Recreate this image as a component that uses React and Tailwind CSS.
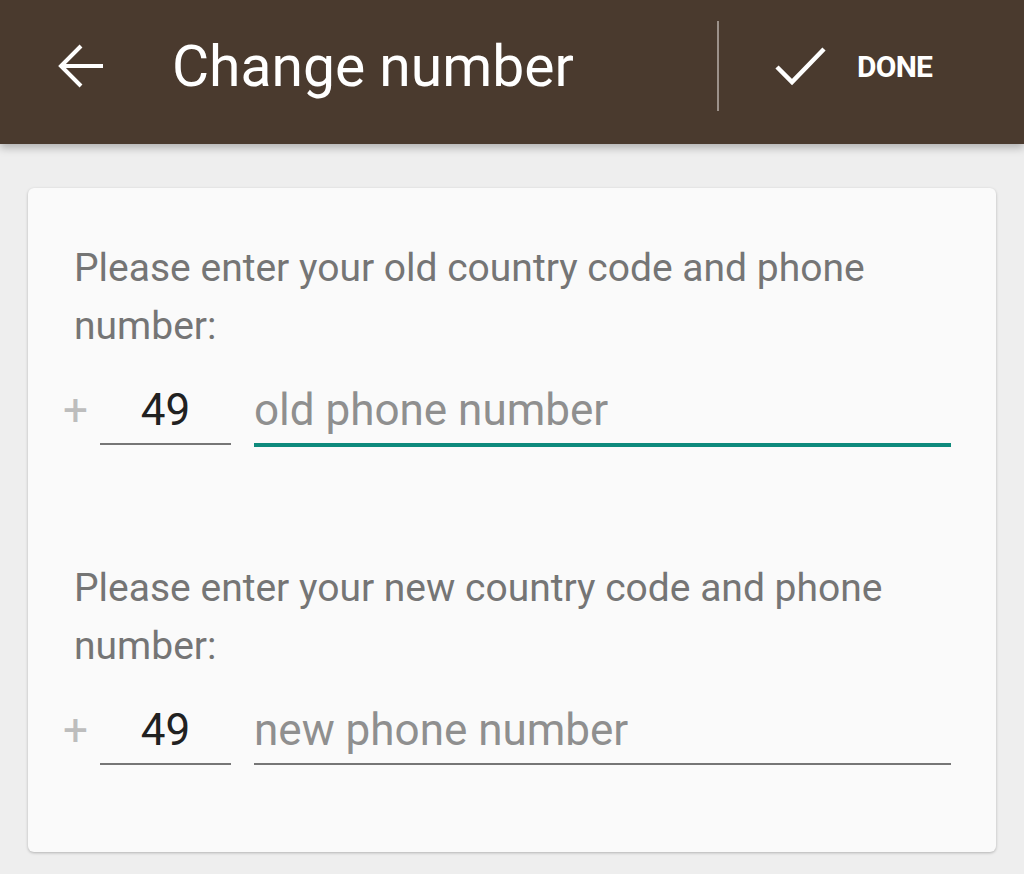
const font = { fontFamily: 'Roboto, "Liberation Sans", sans-serif' };

function PhoneRow({ placeholder, active }) {
  return (
    <div className="flex items-start pl-[35px] pr-[45px]">
      <span className="w-[37px] pt-[2px] text-[44px] leading-[50px] text-[#bdbdbd]">+</span>
      <div className="w-[131px] pt-[2px] pb-[8px] border-b-2 border-[#767676] text-center text-[44px] leading-[50px] text-[#212121]">
        49
      </div>
      <div
        className={`flex-1 ml-[23px] pt-[2px] pb-[8px] text-[44px] leading-[50px] text-[#8f8f8f] ${
          active ? 'border-b-4 border-[#0e8a7c]' : 'border-b-2 border-[#767676]'
        }`}
      >
        {placeholder}
      </div>
    </div>
  );
}

export default function App() {
  return (
    <div className="w-[1024px] h-[874px] bg-[#eeeeee] overflow-hidden" style={font}>
      <header className="relative z-10 h-[144px] bg-[#4a3a2e] shadow-[0_4px_8px_rgba(0,0,0,0.25)]">
        <div className="flex items-center h-[132px]">
          <svg className="ml-[57px] w-[46px] h-[44px]" viewBox="0 0 46 44" fill="none">
            <path d="M46 22H5M24 2L4 22l20 20" stroke="#fff" strokeWidth="4" />
          </svg>
          <h1 className="ml-[69px] text-[57px] text-white leading-none">Change number</h1>
          <div className="ml-auto w-[2px] h-[90px] bg-[#9c918a]" />
          <div className="flex items-center w-[305px]">
            <svg className="ml-[55px] w-[52px] h-[40px]" viewBox="0 0 52 40" fill="none">
              <path d="M3 21l15 15L50 3" stroke="#fff" strokeWidth="4.5" />
            </svg>
            <span className="ml-[31px] text-[30px] font-bold text-white tracking-tight">DONE</span>
          </div>
        </div>
      </header>
      <main className="mx-[28px] mt-[44px] h-[664px] bg-[#fafafa] rounded-[6px] shadow-[0_1px_3px_rgba(0,0,0,0.25)] pt-[51px]">
        <p className="pl-[46px] pr-[40px] text-[39px] leading-[58px] text-[#757575]">
          Please enter your old country code and phone number:
        </p>
        <div className="mt-[28px]">
          <PhoneRow placeholder="old phone number" active />
        </div>
        <p className="mt-[112px] pl-[46px] pr-[40px] text-[39px] leading-[58px] text-[#757575]">
          Please enter your new country code and phone number:
        </p>
        <div className="mt-[28px]">
          <PhoneRow placeholder="new phone number" />
        </div>
      </main>
    </div>
  );
}
